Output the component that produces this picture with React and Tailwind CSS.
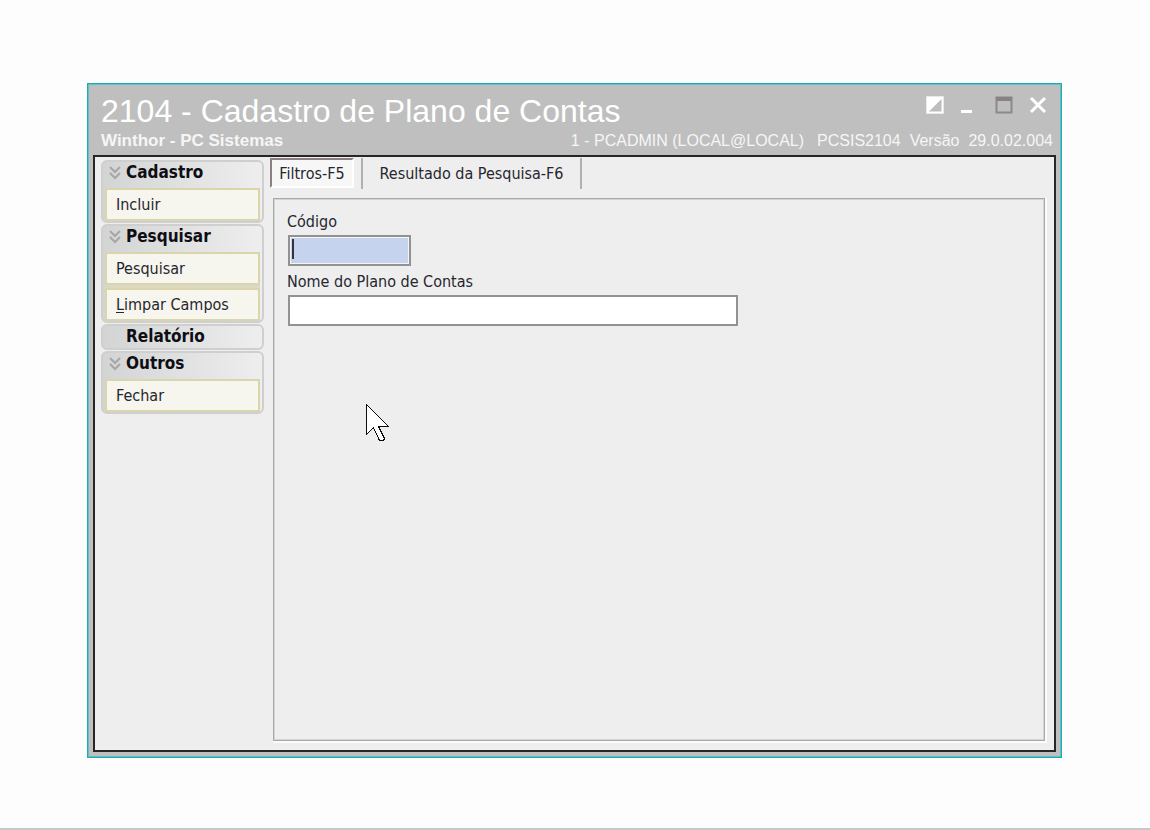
import { useState } from 'react';

const groups = [
    { title: 'Cadastro', items: [{ label: 'Incluir' }] },
    { title: 'Pesquisar', items: [{ label: 'Pesquisar' }, { label: 'Limpar Campos', accessKey: true }] },
    { title: 'Relatório', items: [] },
    { title: 'Outros', items: [{ label: 'Fechar' }] },
];

const Chevrons = () => (
    <svg width="12" height="14" viewBox="0 0 12 14" fill="none" stroke="#a6a6a6" strokeWidth="2">
        <path d="M1 1l5 5 5-5M1 7l5 5 5-5" />
    </svg>
);

const Pointer = () => (
    <svg
        className="pointer-events-none absolute left-[92px] top-[205px]"
        width="24"
        height="38"
        viewBox="0 0 24 38"
        shapeRendering="crispEdges"
    >
        <path d="M.5.5v30l7-7 6 13h4l1-2-6-12h10z" fill="#fff" stroke="#0c0c14" />
    </svg>
);

const TitleBar = () => (
    <header className="flex h-[70px] flex-col justify-between pr-[3px] pl-2 font-['Liberation_Sans',Arial,sans-serif] text-white">
        <div className="flex items-start justify-between pt-2">
            <h1 className="text-[32px] leading-9">2104 - Cadastro de Plano de Contas</h1>
            <div className="flex items-start pt-[3px] pr-[6px]">
                <button aria-label="Recolher" className="mr-[15px]">
                    <svg width="18" height="18" viewBox="0 0 18 18">
                        <path d="M.5.5h17v17H.5z" fill="#fff" stroke="#e9e9e9" />
                        <path d="M15.5 3v12.500H3z" fill="#bcbebd" />
                    </svg>
                </button>
                <button aria-label="Minimizar" className="mr-[22px]">
                    <svg width="14" height="18" viewBox="0 0 14 18">
                        <path d="M2 14h11v3H2z" fill="#fff" />
                    </svg>
                </button>
                <button aria-label="Maximizar" className="mr-4">
                    <svg width="18" height="18" viewBox="0 0 18 18">
                        <path d="M1.500 1.500h15v15h-15z" fill="none" stroke="#8a8a8a" strokeWidth="2" />
                        <path d="M1 1h16v4H1z" fill="#8d8080" />
                    </svg>
                </button>
                <button aria-label="Fechar janela">
                    <svg width="18" height="18" viewBox="0 0 18 18">
                        <path d="M2 2l14 14M16 2L2 16" stroke="#fff" strokeWidth="3" />
                    </svg>
                </button>
            </div>
        </div>
        <div className="flex justify-between pb-1 text-[17px] leading-5">
            <span className="font-bold text-[#f6f6f6]">Winthor - PC Sistemas</span>
            <span className="flex gap-[9px] text-[16px] text-[#f6f6f6]">
                <span className="mr-1">1 - PCADMIN (LOCAL@LOCAL)</span>
                <span>PCSIS2104</span>
                <span>Versão</span>
                <span>29.0.02.004</span>
            </span>
        </div>
    </header>
);

const Group = ({ title, items }) => (
    <section className="rounded-md border-2 border-[#cfcfcf] bg-linear-to-r from-[#d3d4d4] to-[#eeeeee] px-[2px]">
        <h2 className="flex h-[22px] items-center gap-[5px] pl-1 text-[17px] font-bold text-[#0e0e14]">
            <span className="w-3">{items.length > 0 && <Chevrons />}</span>
            {title}
        </h2>
        {items.length > 0 && (
            <div className="mt-1 flex flex-col gap-[3px] bg-[#dcd9c0]">
                {items.map((item) => (
                    <button
                        key={item.label}
                        className="h-[33px] border-2 border-[#dbd5ad] bg-[#f6f5ee] pl-[9px] text-left text-[16px] text-[#26262e]"
                    >
                        {item.accessKey ? (
                            <>
                                <u className="underline-offset-2">{item.label[0]}</u>
                                {item.label.slice(1)}
                            </>
                        ) : (
                            item.label
                        )}
                    </button>
                ))}
            </div>
        )}
    </section>
);

const App = () => {
    const [codigo, setCodigo] = useState('');
    const [nome, setNome] = useState('');

    return (
        <div className="flex min-h-screen flex-col border-b-2 border-[#c8c8c8] bg-[#fdfdfd] pt-[83px] pr-[88px] pb-[70px] pl-[87px] font-['DejaVu_Sans_Condensed','DejaVu_Sans',sans-serif]">
            <main className="flex flex-1 flex-col border border-[#16adb8] bg-[#bebfbe] px-[5px] pt-px pb-[5px] shadow-[inset_0_0_0_1px_#6bbcc0]">
                <TitleBar />
                <div className="flex flex-1 border-2 border-[#262626] bg-[#eeeeee]">
                    <aside className="w-[175px] shrink-0 px-[6px] pt-[3px]">
                        <div className="flex flex-col gap-px">
                            {groups.map((group) => (
                                <Group key={group.title} {...group} />
                            ))}
                        </div>
                    </aside>
                    <div className="flex flex-1 flex-col pr-[9px] pb-[9px]">
                        <div role="tablist" className="flex h-8 pt-px text-[16px] text-[#26262e]">
                            <button
                                role="tab"
                                aria-selected="true"
                                className="mr-[7px] h-[30px] w-[84px] border-2 border-t-[#8d8080] border-r-white border-b-white border-l-[#8d8080] bg-[#f7f7f7] pt-[2px]"
                            >
                                Filtros-F5
                            </button>
                            <button
                                role="tab"
                                aria-selected="false"
                                className="w-[221px] border-x-2 border-[#b0b0b0]"
                            >
                                Resultado da Pesquisa-F6
                            </button>
                        </div>
                        <form className="relative mt-[9px] ml-[3px] flex flex-1 flex-col items-start border border-[#a9a9a9] px-[14px] pt-[11px] text-[16px] text-[#26262e] shadow-[inset_0_0_0_1px_#d4d4d4,1px_1px_0_1px_#fbfbfb]">
                            <label htmlFor="codigo" className="-ml-px leading-6">Código</label>
                            <div className="relative mt-px">
                                <input
                                    id="codigo"
                                    value={codigo}
                                    onChange={(e) => setCodigo(e.target.value)}
                                    className="block h-[31px] w-[123px] border-2 border-[#929292] bg-[#c5d3ee] px-1 shadow-[inset_0_0_0_1px_#f4f4f4] outline-none"
                                />
                                <span className="absolute top-1 left-1 h-5 w-[2px] bg-[#33333b]" />
                            </div>
                            <label htmlFor="nome" className="mt-1 -ml-px leading-6">Nome do Plano de Contas</label>
                            <input
                                id="nome"
                                value={nome}
                                onChange={(e) => setNome(e.target.value)}
                                className="mt-px block h-[31px] w-full max-w-[450px] border-2 border-[#929292] bg-white px-1 outline-none"
                            />
                            <Pointer />
                        </form>
                    </div>
                </div>
            </main>
        </div>
    );
};

export default App;
